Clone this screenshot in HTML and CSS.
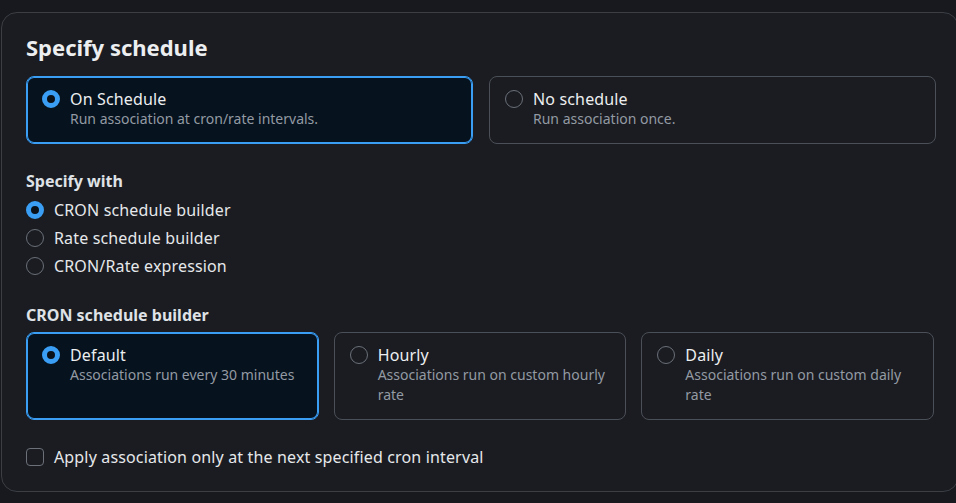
FILE: index.html
```html
<!DOCTYPE html>
<html lang="en">
<head>
<meta charset="UTF-8">
<meta name="viewport" content="width=device-width, initial-scale=1.0">
<title>Specify schedule</title>
<link rel="stylesheet" href="styles.css">
</head>
<body>

<section class="panel">
  <h2 class="panel-title">Specify schedule</h2>

  <!-- Schedule type tiles -->
  <div class="tiles tiles-two">
    <label class="tile selected">
      <span class="radio checked"></span>
      <span class="tile-text">
        <span class="tile-label">On Schedule</span>
        <span class="tile-desc">Run association at cron/rate intervals.</span>
      </span>
    </label>
    <label class="tile">
      <span class="radio"></span>
      <span class="tile-text">
        <span class="tile-label">No schedule</span>
        <span class="tile-desc">Run association once.</span>
      </span>
    </label>
  </div>

  <!-- Specify with -->
  <div class="field field-specify">
    <div class="field-label">Specify with</div>
    <ul class="radio-list">
      <li><span class="radio checked"></span>CRON schedule builder</li>
      <li><span class="radio"></span>Rate schedule builder</li>
      <li><span class="radio"></span>CRON/Rate expression</li>
    </ul>
  </div>

  <!-- CRON schedule builder -->
  <div class="field field-cron">
    <div class="field-label">CRON schedule builder</div>
    <div class="tiles tiles-three">
      <label class="tile selected">
        <span class="radio checked"></span>
        <span class="tile-text">
          <span class="tile-label">Default</span>
          <span class="tile-desc">Associations run every 30 minutes</span>
        </span>
      </label>
      <label class="tile">
        <span class="radio"></span>
        <span class="tile-text">
          <span class="tile-label">Hourly</span>
          <span class="tile-desc">Associations run on custom hourly rate</span>
        </span>
      </label>
      <label class="tile">
        <span class="radio"></span>
        <span class="tile-text">
          <span class="tile-label">Daily</span>
          <span class="tile-desc">Associations run on custom daily rate</span>
        </span>
      </label>
    </div>
  </div>

  <label class="check-row">
    <span class="checkbox"></span>
    Apply association only at the next specified cron interval
  </label>
</section>

</body>
</html>
```

FILE: styles.css
```css
/* General styles */
body {
  font-family: 'Noto Sans', 'Open Sans', sans-serif;
  margin: 0;
  padding: 12px 0 0 1px;
  background-color: #17191e;
  color: #e6e8eb;
  overflow: hidden;
}

.panel {
  box-sizing: border-box;
  width: 958px;
  height: 480px;
  padding: 20px 24px 0;
  background-color: #1a1c21;
  border: 1px solid #3b3e45;
  border-radius: 16px;
}

.panel-title {
  margin: 0;
  font-size: 22px;
  line-height: 28px;
  font-weight: 700;
  color: #eceef0;
}

/* Tiles */
.tiles {
  display: grid;
  width: 910px;
}

.tiles-two {
  grid-template-columns: 1fr 1fr;
  gap: 16px;
  margin-top: 15px;
}

.tiles-three {
  grid-template-columns: 1fr 1fr 1fr;
  gap: 15px;
  width: 908px;
  margin-top: 7px;
}

.tile {
  display: flex;
  align-items: flex-start;
  gap: 10px;
  padding: 12px 15px 14px;
  border: 1px solid #4b4f57;
  border-radius: 8px;
}

.tile.selected {
  border-color: #3a9ef5;
  box-shadow: inset 0 0 0 1px #3a9ef5;
  background-color: #06121e;
}

.tile .radio {
  margin-top: 1px;
}

.tile-text {
  display: flex;
  flex-direction: column;
}

.tile-label {
  font-size: 16px;
  line-height: 20px;
  letter-spacing: 0.15px;
  color: #eceef0;
}

.tile-desc {
  font-size: 14px;
  line-height: 20px;
  color: #939aa3;
}

/* Radios and checkbox */
.radio {
  box-sizing: border-box;
  flex: none;
  width: 18px;
  height: 18px;
  border: 1.5px solid #6b7079;
  border-radius: 50%;
}

.radio.checked {
  border: 5px solid #3a9ef5;
  background-color: #0b1118;
}

.checkbox {
  box-sizing: border-box;
  flex: none;
  width: 18px;
  height: 18px;
  border: 1.5px solid #6b7079;
  border-radius: 4px;
}

/* Fields */
.field-label {
  font-size: 16px;
  line-height: 20px;
  font-weight: 700;
  color: #dfe2e6;
}

.field-specify {
  margin-top: 27px;
}

.field-cron {
  margin-top: 25px;
}

.radio-list {
  list-style-type: none;
  margin: 5px 0 0;
  padding: 0;
}

.radio-list li {
  display: flex;
  align-items: center;
  gap: 10px;
  height: 28px;
  font-size: 16px;
  letter-spacing: 0.15px;
  color: #e6e8eb;
}

.check-row {
  display: flex;
  align-items: center;
  gap: 10px;
  margin-top: 27px;
  font-size: 16px;
  line-height: 20px;
  letter-spacing: 0.15px;
  color: #e6e8eb;
}
```
